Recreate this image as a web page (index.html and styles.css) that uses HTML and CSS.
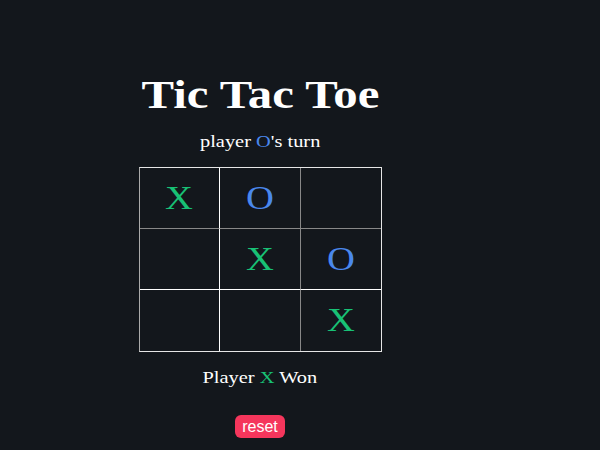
FILE: index.html
```html
<!DOCTYPE html>
<html lang="en">
<head>
    <meta charset="UTF-8">
    <title>Tic Tac Toe</title>
    <link rel="stylesheet" href="styles.css">
</head>
<body>
    <div class="game">
        <h1 class="wide">Tic Tac Toe</h1>
        <p class="status wide">player <span class="o">O</span>'s turn</p>
        <div class="board">
            <div class="cell c1"><span class="mark x">X</span></div>
            <div class="cell c2"><span class="mark o">O</span></div>
            <div class="cell c3"></div>
            <div class="cell c4"></div>
            <div class="cell c5"><span class="mark x">X</span></div>
            <div class="cell c6"><span class="mark o">O</span></div>
            <div class="cell c7"></div>
            <div class="cell c8"></div>
            <div class="cell c9"><span class="mark x">X</span></div>
        </div>
        <p class="winner wide">Player <span class="x">X</span> Won</p>
        <button class="reset">reset</button>
    </div>
</body>
</html>
```

FILE: styles.css
```css
body {
    background: #13171c;
    color: #fff;
    font-family: "Liberation Serif", "Times New Roman", serif;
    margin: 0;
}
.game {
    width: 520px;
    padding-top: 73px;
    display: flex;
    flex-direction: column;
    align-items: center;
}
.wide {
    transform: scaleX(1.2);
}
h1 {
    font-size: 40px;
    line-height: 44px;
    margin: 0;
}
h1.wide {
    transform: scaleX(1.22);
}
.status, .winner {
    font-size: 17px;
    line-height: 20px;
    margin: 15px 0 0;
}
.winner {
    margin-top: 16px;
}
.x {
    color: #18c175;
}
.o {
    color: #4a88ec;
}
.board {
    display: grid;
    grid-template-columns: 80px 81px 80px;
    grid-template-rows: repeat(3, 61px);
    border: 1px solid #e6e6e6;
    border-left-color: #aaa;
    margin: 15px 0 0;
}
.cell {
    display: flex;
    align-items: center;
    justify-content: center;
}
.mark {
    font-size: 33px;
    line-height: 1;
    transform: scaleX(1.17);
}
.c1, .c4, .c7 {
    border-right: 1px solid #fff;
}
.c2, .c5, .c8 {
    border-right: 1px solid #888;
}
.c1, .c2, .c3 {
    border-bottom: 1px solid #888;
}
.c4, .c5, .c6 {
    border-bottom: 1px solid #fff;
}
.reset {
    margin-top: 27px;
    background: #f5365c;
    color: #fff;
    border: none;
    border-radius: 6px;
    font-family: "Liberation Sans", Arial, sans-serif;
    font-size: 16px;
    line-height: 18px;
    padding: 3px 7px 2px;
}
```
